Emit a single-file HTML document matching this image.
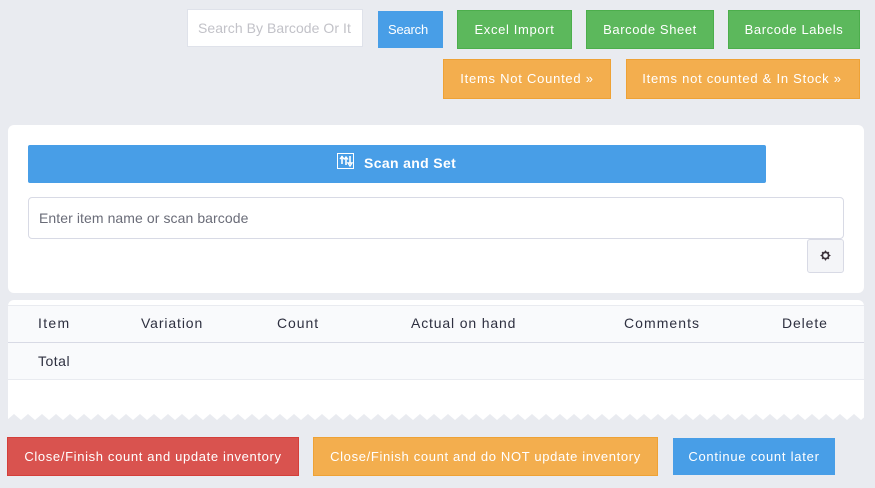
<!DOCTYPE html>
<html><head><meta charset="utf-8"><style>
html,body{margin:0;padding:0;width:875px;height:488px;overflow:hidden;background:#e9ebf0;font-family:"Liberation Sans",sans-serif}
.a{position:absolute;box-sizing:border-box}
.b{position:absolute;box-sizing:border-box;color:#fff;font-size:13px;text-align:center;white-space:nowrap;border:1px solid}
.g{background:#5cb85c;border-color:#4cae4c;top:10px;height:39px;line-height:37px}
.o{background:#f3ae4e;border-color:#eea236;top:59px;height:40px;line-height:38px}
.t{position:absolute;white-space:nowrap;font-size:14px;color:#2e3040;line-height:16px}
</style></head><body>
<div class="a" style="left:187px;top:9px;width:176px;height:38px;background:#fff;border:1px solid #dfe2ea"></div>
<div class="t" style="left:198px;top:20px;color:#c2c2c8;letter-spacing:.05px">Search By Barcode Or It</div>
<div class="b" style="left:378px;top:11px;width:65px;height:37px;line-height:35px;background:#489ee7;border-color:#489ee7;letter-spacing:-.2px;text-align:left;padding-left:9px">Search</div>
<div class="b g" style="left:457px;width:115px;letter-spacing:.65px">Excel Import</div>
<div class="b g" style="left:586px;width:128px;letter-spacing:.6px">Barcode Sheet</div>
<div class="b g" style="left:728px;width:132px;letter-spacing:.6px">Barcode Labels</div>
<div class="b o" style="left:443px;width:168px;letter-spacing:.75px">Items Not Counted »</div>
<div class="b o" style="left:626px;width:234px;letter-spacing:.75px;padding-right:2px">Items not counted &amp; In Stock »</div>

<div class="a" style="left:8px;top:125px;width:856px;height:168px;background:#fff;border-radius:6px"></div>
<div class="a" style="left:28px;top:145px;width:738px;height:38px;background:#489ee7;border-radius:2px"></div>
<svg class="a" style="left:337px;top:153px" width="18" height="16" viewBox="0 0 18 16" fill="none" stroke="#fff">
<rect x=".5" y=".5" width="16" height="15"/>
<path d="M5 3v8M9 4v8M13 3v7" stroke-width="1.6"/>
<path d="M3 6l2-2.5L7 6M7 6.5l2-2.5 2 2.5M11 10h4l-2 3z" stroke-width="1.4"/>
</svg>
<div class="t" style="left:364px;top:155px;color:#fff;font-weight:bold;letter-spacing:.35px">Scan and Set</div>
<div class="a" style="left:28px;top:197px;width:816px;height:42px;background:#fff;border:1px solid #d8dae5;border-radius:4px"></div>
<div class="t" style="left:39px;top:210px;color:#6a6c78;letter-spacing:.08px">Enter item name or scan barcode</div>
<div class="a" style="left:807px;top:239px;width:37px;height:34px;background:#f4f5f8;border:1px solid #d8dae5;border-radius:3px"></div>
<svg class="a" style="left:819px;top:249px" width="13" height="13" viewBox="0 0 13 13" fill="none" stroke="#3a3038">
<circle cx="6.5" cy="6.5" r="3.2" stroke-width="1.8"/>
<path d="M6.5 1.5v1.5M6.5 10v1.5M1.5 6.5h1.5M10 6.5h1.5M3 3l1 1M9 9l1 1M3 10l1-1M9 4l1-1" stroke-width="1.1"/>
</svg>

<div class="a" style="left:8px;top:300px;width:856px;height:120px;background:#fff;border-radius:6px 6px 0 0"></div>
<div class="a" style="left:8px;top:305px;width:856px;height:75px;background:#f9fafc;border-top:1px solid #e9ebf0;border-bottom:1px solid #e9ebf0"></div>
<div class="a" style="left:8px;top:342px;width:856px;height:1px;background:#d8dae5"></div>
<div class="t" style="left:38px;top:315px;letter-spacing:1.3px">Item</div>
<div class="t" style="left:141px;top:315px;letter-spacing:.88px">Variation</div>
<div class="t" style="left:277px;top:315px;letter-spacing:.95px">Count</div>
<div class="t" style="left:411px;top:315px;letter-spacing:.85px">Actual on hand</div>
<div class="t" style="left:624px;top:315px;letter-spacing:1.05px">Comments</div>
<div class="t" style="left:782px;top:315px;letter-spacing:.88px">Delete</div>
<div class="t" style="left:38px;top:353px;letter-spacing:.5px">Total</div>
<svg class="a" style="left:8px;top:413px" width="856" height="8" viewBox="0 0 856 8">
<defs><pattern id="z" x="-1" y="0" width="14" height="8" patternUnits="userSpaceOnUse"><polygon points="0,7 7,1 14,7 14,8 0,8" fill="#e9ebf0"/></pattern></defs>
<rect width="856" height="8" fill="url(#z)"/>
</svg>

<div class="b" style="left:7px;top:437px;width:292px;height:39px;line-height:37px;background:#d9534f;border-color:#d43f3a;letter-spacing:.65px">Close/Finish count and update inventory</div>
<div class="b" style="left:313px;top:437px;width:345px;height:39px;line-height:37px;background:#f3ae4e;border-color:#eea236;letter-spacing:.65px">Close/Finish count and do NOT update inventory</div>
<div class="b" style="left:673px;top:438px;width:162px;height:37px;line-height:35px;background:#489ee7;border-color:#489ee7;letter-spacing:.75px">Continue count later</div>
</body></html>
